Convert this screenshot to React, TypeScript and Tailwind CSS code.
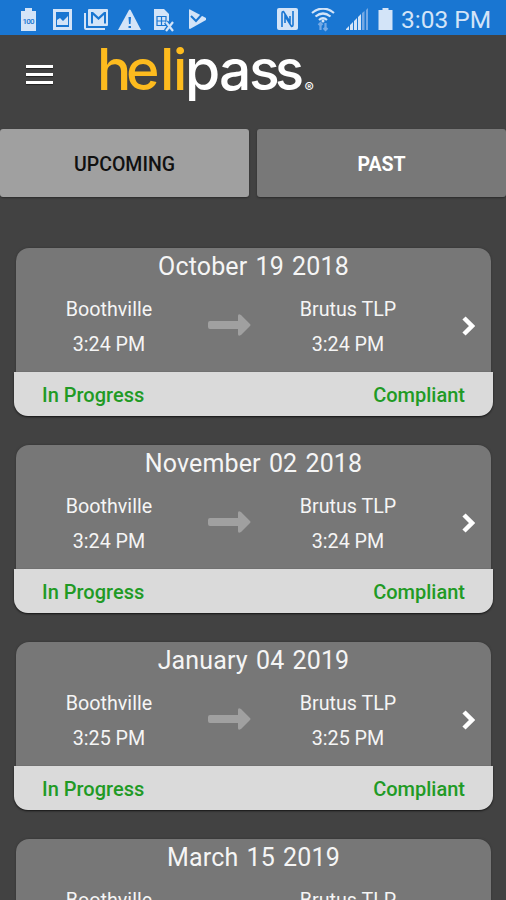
import clsx from 'clsx';

interface Stop {
  name: string;
  time: string;
}

interface Trip {
  date: string;
  from: Stop;
  to: Stop;
  status: string;
  compliance: string;
}

const createTrip = (date: string, time: string): Trip => ({
  date,
  from: { name: 'Boothville', time },
  to: { name: 'Brutus TLP', time },
  status: 'In Progress',
  compliance: 'Compliant',
});

const TRIPS: Trip[] = [
  createTrip('October 19 2018', '3:24 PM'),
  createTrip('November 02 2018', '3:24 PM'),
  createTrip('January 04 2019', '3:25 PM'),
  createTrip('March 15 2019', '3:25 PM'),
];

const NotificationIcons = () => (
  <svg width="190" height="24" viewBox="0 0 190 24" fill="#d3e4f8" aria-hidden="true">
    {/* full battery */}
    <path d="M5 0h7v3h4v20H1V3h4z" />
    <text x="8.5" y="16" fontSize="8" fontWeight="500" textAnchor="middle" textLength="12" fill="#1976d2">
      100
    </text>
    {/* picture */}
    <path fillRule="evenodd" d="M33 1h19v21H33zM36 4v15h13V4z" />
    <path d="M37 17v-5l3-2 3 3 5-5v9z" />
    {/* mail */}
    <path fillRule="evenodd" d="M69 1h18q1 0 1 1v15q0 1-1 1H69q-1 0-1-1V2q0-1 1-1zm2 14.500h2V7l5.500 5L84 7v8.500h2V4h-2l-5.500 5L73 4h-2z" />
    <path d="M64 5h2v15h19v2H66q-2 0-2-2z" />
    {/* warning */}
    <path d="M109 2q.8-1 1.600 0L121 22H98z" />
    <path d="M108.500 9h2.500l-.5 7h-1.500zM108.500 18h2.500v2h-2.500z" fill="#1976d2" />
    {/* sim error */}
    <path d="M134 1h10l5 5v16h-15z" />
    <path d="M137 8.500h9v9h-9zM137 13h9M141.500 8.500v9" fill="none" stroke="#1976d2" strokeWidth="1.200" />
    <path d="m146 14 7 9m0-9-7 9" stroke="#1976d2" strokeWidth="5" />
    <path d="m146 14 7 9m0-9-7 9" stroke="#d3e4f8" strokeWidth="2.200" />
    {/* play check */}
    <path d="M169 2q0-1 1-.5L186 10v2l-16 9q-1 0-1-1z" />
    <path d="m171 8 5 5 9-10" fill="none" stroke="#1976d2" strokeWidth="2" />
  </svg>
);

const SystemIcons = () => (
  <svg width="118" height="24" viewBox="0 0 118 24" fill="#d3e4f8" aria-hidden="true">
    {/* nfc */}
    <rect x="1" y="0" width="21" height="22" rx="2" />
    <path d="M6 19V5q0-1.500 1.500-1.500L14 14V8M17 3v14q0 1.500-1.500 1.500L9 8v7" fill="none" stroke="#1976d2" strokeWidth="1.600" />
    {/* wifi */}
    <g fill="none" stroke="#d3e4f8" strokeWidth="2.200">
      <path d="M36 5q11-9 22 0M39.500 8.500q7.500-6 15 0M43 12q4-3.500 8 0" />
    </g>
    <circle cx="47" cy="13" r="1.500" />
    <path d="M44.500 22v-7m-2 2 2-2 2 2M49.500 15v7m-2-2 2 2 2-2" fill="none" stroke="#75aae6" strokeWidth="2.200" />
    {/* signal */}
    <path d="M70 22v-1l3-3v4zM74 22v-5l3-3v8zM78 22v-9l3-3v12zM82 22V9l3-3v16z" />
    <path d="M86 22V5l2.500-2v19zM90 22V2l2-2v22z" fill="#76a9e4" />
    {/* battery */}
    <path d="M106.500 0h6v2h4v20h-14V2h4z" />
  </svg>
);

const StatusBar = () => (
  <div className="flex h-[35px] shrink-0 items-center bg-[#1976d2] pl-5">
    <div className="mt-1 shrink-0">
      <NotificationIcons />
    </div>
    <div className="mt-1 ml-[66px] shrink-0">
      <SystemIcons />
    </div>
    <span className="mt-[5px] ml-[7px] text-[24.5px] leading-none whitespace-nowrap text-[#d3e4f8]">
      3:03 PM
    </span>
  </div>
);

const Logo = () => (
  <svg
    width="220"
    height="76"
    viewBox="0 0 220 76"
    className="overflow-visible"
    fontFamily="Inter, sans-serif"
    fontSize="57"
    fontWeight="550"
  >
    <text x="-1 28 62 75" y="49" fill="#fdbb1e">
      heli
    </text>
    <text x="87 121 151" y="49" fill="#ffffff">
      pas
    </text>
    <text x="177" y="49" textLength="29" lengthAdjust="spacingAndGlyphs" fill="#ffffff">
      s
    </text>
    <text x="206.5" y="52" fontSize="14" fontWeight="500" fill="#ffffff">
      ®
    </text>
  </svg>
);

const Header = () => (
  <header className="flex h-[94px] shrink-0 items-start">
    <button type="button" aria-label="Menu" className="mt-[30px] ml-[26px] flex w-[27px] flex-col gap-[5px]">
      <span className="h-[3px] bg-white shadow-[0_1px_1px_#222222]" />
      <span className="h-[3px] bg-white shadow-[0_1px_1px_#222222]" />
      <span className="h-[3px] bg-white shadow-[0_1px_1px_#222222]" />
    </button>
    <div className="mt-1.5 ml-[45px]">
      <Logo />
    </div>
  </header>
);

interface TabProps {
  label: string;
  isActive?: boolean;
}

const Tab = ({ label, isActive }: TabProps) => (
  <button
    type="button"
    className={clsx(
      'flex-1 rounded-[3px] pt-1 text-[19.5px] shadow-[0_1px_2px_#2b2b2b]',
      isActive ? 'bg-[#a0a0a0] font-medium text-[#111111]' : 'bg-[#787878] font-bold text-white'
    )}
  >
    {label}
  </button>
);

const StopInfo = ({ name, time }: Stop) => (
  <div className="flex w-[140px] flex-col items-center text-[19.7px] leading-[35px]">
    <span>{name}</span>
    <span>{time}</span>
  </div>
);

const TripCard = ({ date, from, to, status, compliance }: Trip) => (
  <li className="flex h-[168px] shrink-0 flex-col text-[#f5f5f5]">
    <div className="mx-0.5 h-[123.500px] rounded-t-[13px] bg-[#777777] shadow-[0_0_2px_#303030]">
      <h2 className="h-11 text-center text-[25px] leading-[37px] tracking-[0.15px] [word-spacing:1.800px]">{date}</h2>
      <div className="flex items-center pl-[23px]">
        <StopInfo {...from} />
        <svg width="43" height="22" viewBox="0 0 43 22" className="mt-[-4px] ml-[29px]" fill="#a0a0a0">
          <path d="M2 7h28V2q0-3 3-1l9 9q1 1 0 2l-9 9q-3 2-3-1v-5H2q-2 0-2-2V9q0-2 2-2z" />
        </svg>
        <div className="ml-[27px]">
          <StopInfo {...to} />
        </div>
        <svg width="13" height="20" viewBox="0 0 13 20" className="mt-[-2px] ml-[44px]" fill="none" stroke="#ffffff" strokeWidth="4.500">
          <path d="m2 2 8 8-8 8" />
        </svg>
      </div>
    </div>
    <div className="flex h-[44.500px] items-center justify-between rounded-b-[14px] bg-[#dadada] px-[28px] pt-0.5 text-[20px] font-medium text-[#219a25] shadow-[0_1px_2px_#151515]">
      <span>{status}</span>
      <span>{compliance}</span>
    </div>
  </li>
);

export default function App() {
  return (
    <div className="flex h-[900px] w-[506px] flex-col overflow-hidden bg-[#424242] font-['Roboto',sans-serif]">
      <StatusBar />
      <Header />
      <nav className="flex h-[68px] shrink-0 gap-2">
        <Tab label="UPCOMING" isActive />
        <Tab label="PAST" />
      </nav>
      <ul className="mt-[51px] flex flex-col gap-[29px] pr-[13px] pl-[14px]">
        {TRIPS.map((trip) => (
          <TripCard key={trip.date} {...trip} />
        ))}
      </ul>
    </div>
  );
}
